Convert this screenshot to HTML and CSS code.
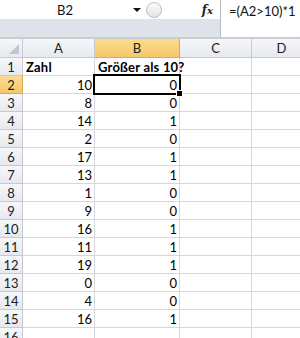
FILE: index.html
```html
<!DOCTYPE html>
<html lang="de">
<head>
  <meta charset="UTF-8" />
  <title>Tabelle</title>
  <link rel="stylesheet" href="styles.css">
</head>
<body>
  <div class="formula-bar">
    <div class="left-part">
      <div class="name-row">
        <div class="name-box">B2</div>
        <span class="drop-arrow"></span>
        <span class="grip"></span>
        <span class="fx">f<i>x</i></span>
      </div>
      <div class="band"></div>
    </div>
    <div class="formula">=(A2&gt;10)*1</div>
  </div>

  <div class="sheet" id="sheet">
    <div class="corner"><span class="tri"></span></div>
    <div class="col-head">A</div>
    <div class="col-head selected">B</div>
    <div class="col-head">C</div>
    <div class="col-head">D</div>
  </div>

  <script>
    const data = [
      ["Zahl", "Größer als 10?"],
      [10, 0], [8, 0], [14, 1], [2, 0], [17, 1], [13, 1], [1, 0],
      [9, 0], [16, 1], [11, 1], [19, 1], [0, 0], [4, 0], [16, 1],
      ["", ""]
    ];
    const sheet = document.getElementById("sheet");

    data.forEach((row, i) => {
      const rowNum = i + 1;
      const head = document.createElement("div");
      head.className = "row-head" + (rowNum === 2 ? " selected" : "");
      head.textContent = rowNum;
      sheet.appendChild(head);

      row.concat(["", ""]).forEach((value, c) => {
        const cell = document.createElement("div");
        cell.className = "cell";
        if (typeof value === "number") cell.classList.add("num");
        if (rowNum === 1) cell.classList.add("bold");
        if (rowNum === 2 && c === 1) cell.classList.add("active");
        cell.textContent = value;
        sheet.appendChild(cell);
      });
    });
  </script>
</body>
</html>
```

FILE: styles.css
```css
body {
  margin: 0;
  font-family: "Lato", "Liberation Sans", sans-serif;
  background: #fff;
  overflow: hidden;
}

.formula-bar {
  display: flex;
  height: 37px;
  border-bottom: 2px solid #c9ced6;
  background: #fff;
}

.left-part {
  width: 220px;
  display: flex;
  flex-direction: column;
}

.name-row {
  height: 19px;
  display: flex;
  align-items: center;
  background: #fff;
}

.name-box {
  width: 130px;
  text-align: center;
  font-size: 13px;
  color: #111;
}

.drop-arrow {
  width: 0;
  height: 0;
  margin-left: 3px;
  border-left: 4px solid transparent;
  border-right: 4px solid transparent;
  border-top: 4px solid #111;
}

.grip {
  width: 14px;
  height: 14px;
  margin-left: 5px;
  border-radius: 50%;
  border: 1px solid #b9bec6;
  background: linear-gradient(#fafafa, #e2e4e8);
}

.fx {
  margin-left: auto;
  margin-right: 7px;
  font-family: "DejaVu Serif", serif;
  font-style: italic;
  font-weight: bold;
  font-size: 12px;
  color: #222;
}

.fx i {
  font-size: 10px;
}

.band {
  flex: 1;
  background: #dfe3e9;
}

.formula {
  flex: 1;
  border-left: 1px solid #b6bcc6;
  padding: 3px 0 0 8px;
  font-size: 13px;
  color: #111;
}

.sheet {
  display: grid;
  grid-template-columns: 23px 72px 85px 72px 60px;
  grid-auto-rows: 18px;
  grid-template-rows: 19px;
  font-size: 13px;
}

.sheet > div {
  box-sizing: border-box;
  border-right: 1px solid #d4d7dc;
  border-bottom: 1px solid #d4d7dc;
}

.corner,
.col-head,
.row-head {
  background: linear-gradient(#f6f7f9, #e6e9ee);
  color: #222;
  border-color: #c5cad2 !important;
  display: flex;
  align-items: center;
  justify-content: center;
}

.corner {
  position: relative;
}

.tri {
  position: absolute;
  right: 3px;
  bottom: 3px;
  width: 0;
  height: 0;
  border-left: 10px solid transparent;
  border-bottom: 10px solid #c3c7cd;
}

.col-head.selected,
.row-head.selected {
  background: linear-gradient(#fbdc8f, #f5c86a);
  border-color: #e0a946 !important;
}

.cell {
  padding: 0 2px 0 3px;
  display: flex;
  align-items: center;
  color: #000;
}

.cell.num {
  justify-content: flex-end;
}

.cell.bold {
  font-weight: bold;
  letter-spacing: 0.2px;
  white-space: nowrap;
}

.cell.active {
  position: relative;
}

.cell.active::after {
  content: "";
  position: absolute;
  left: -2px;
  top: -2px;
  right: -2px;
  bottom: -2px;
  border: 2px solid #000;
}

.cell.active::before {
  content: "";
  position: absolute;
  right: -4px;
  bottom: -4px;
  width: 5px;
  height: 5px;
  background: #000;
  border: 1px solid #fff;
  z-index: 1;
}
```
